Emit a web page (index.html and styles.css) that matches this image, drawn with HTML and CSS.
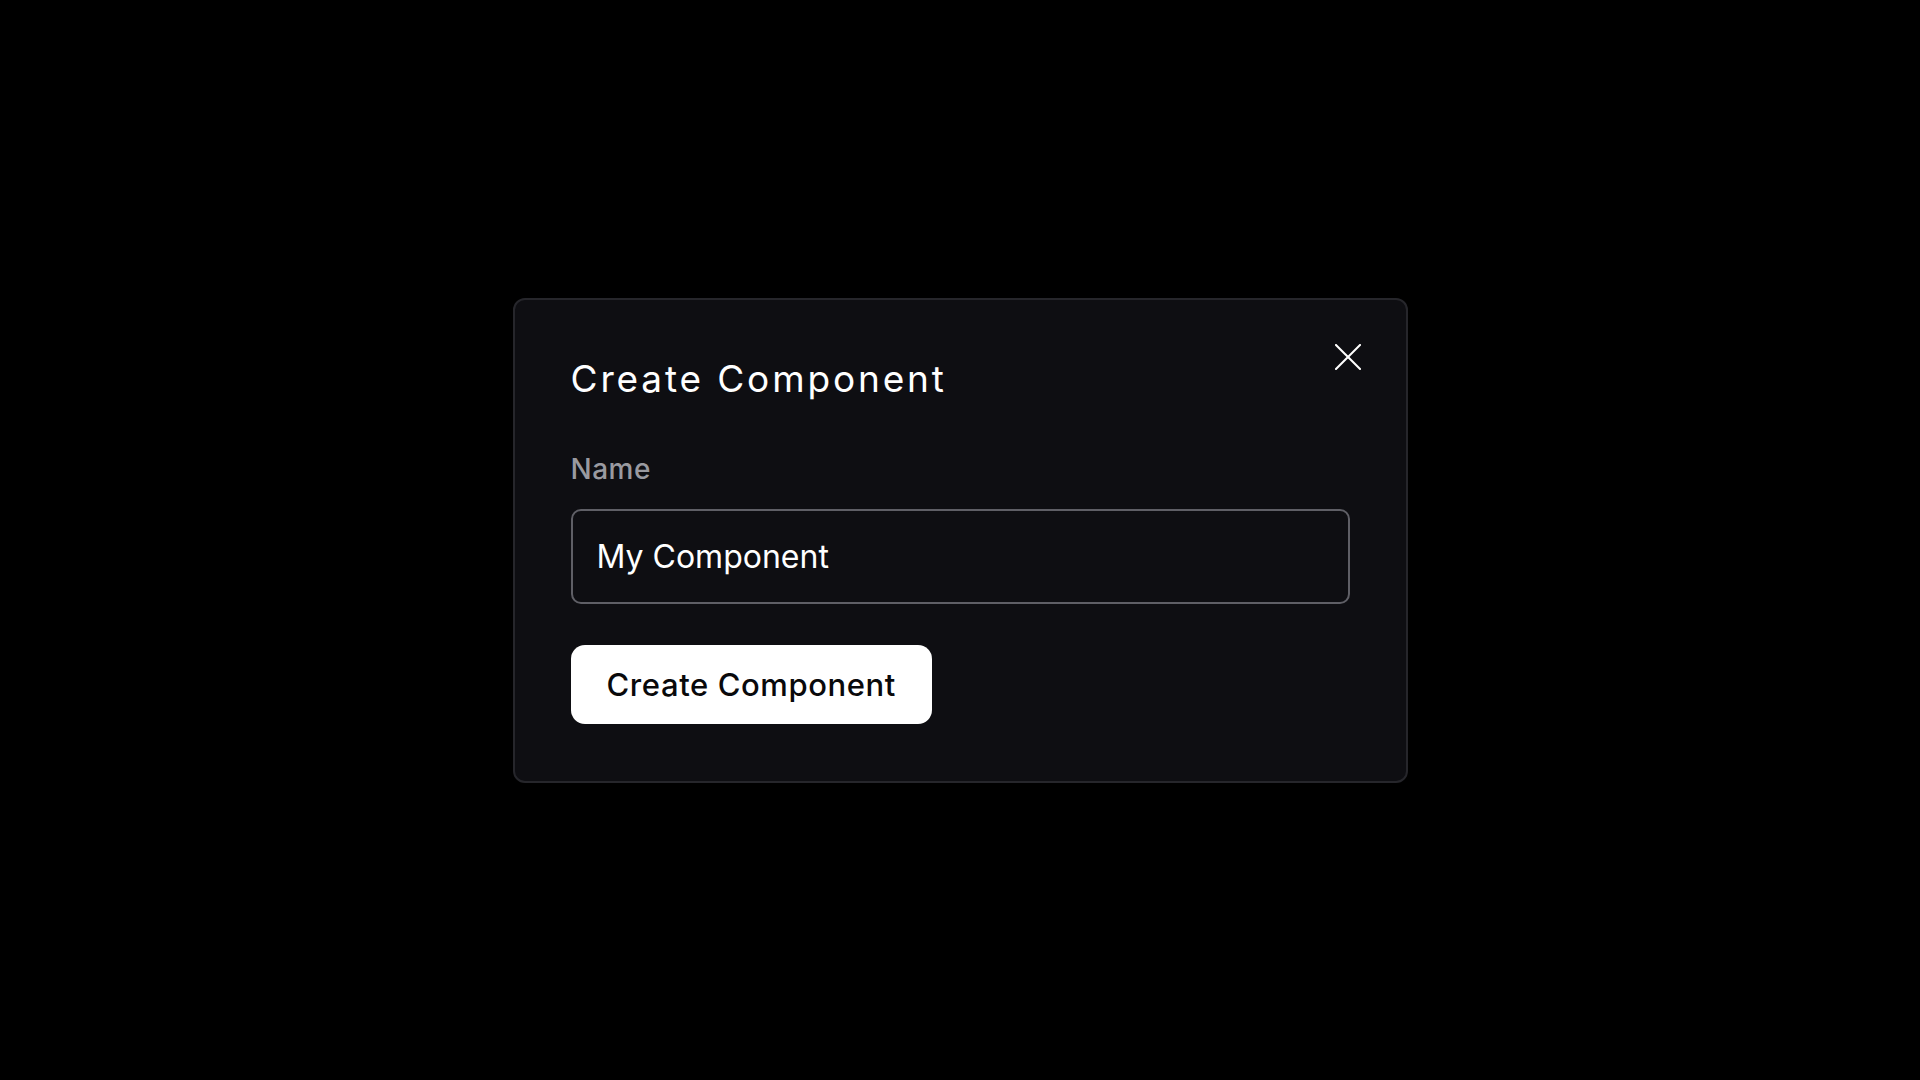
FILE: index.html
```html
<!DOCTYPE html>
<html lang="en">
<head>
<meta charset="utf-8">
<title>Create Component</title>
<link rel="stylesheet" href="styles.css">
</head>
<body>
<div class="overlay">
  <div class="dialog">
    <button class="close" aria-label="Close">
      <svg width="26" height="26" viewBox="0 0 26 26" fill="none" stroke="#ffffff" stroke-width="2" stroke-linecap="square">
        <line x1="1" y1="1" x2="25" y2="25"/>
        <line x1="25" y1="1" x2="1" y2="25"/>
      </svg>
    </button>
    <h2 class="title">Create Component</h2>
    <label class="label" for="name">Name</label>
    <div class="input" id="name">My Component</div>
    <div class="actions">
      <button class="primary">Create Component</button>
    </div>
  </div>
</div>
</body>
</html>
```

FILE: styles.css
```css
html, body {
  margin: 0;
  padding: 0;
  background: #000000;
  height: 100%;
}
body {
  font-family: Inter, "Noto Sans", sans-serif;
  color: #ffffff;
}
.overlay {
  height: 1080px;
  display: flex;
  align-items: center;
  justify-content: center;
}
.dialog {
  position: relative;
  box-sizing: border-box;
  width: 895px;
  padding: 57px 56px 57px 56px;
  background: #0e0e12;
  border: 2px solid #26262b;
  border-radius: 12px;
  display: flex;
  flex-direction: column;
}
.close {
  position: absolute;
  top: 44px;
  right: 45px;
  width: 26px;
  height: 26px;
  padding: 0;
  border: 0;
  background: transparent;
  display: flex;
}
.title {
  margin: 0;
  font-size: 37px;
  line-height: 43px;
  font-weight: 400;
  letter-spacing: 2.85px;
  color: #ffffff;
}
.label {
  margin-top: 52px;
  font-size: 28px;
  line-height: 34px;
  font-weight: 500;
  letter-spacing: 0.5px;
  color: #9a9aa0;
}
.input {
  margin-top: 23px;
  box-sizing: border-box;
  height: 95px;
  border: 2px solid #5f5f66;
  border-radius: 10px;
  padding: 0 24px;
  display: flex;
  align-items: center;
  font-size: 32px;
  color: #ffffff;
}
.actions {
  margin-top: 41px;
  display: flex;
}
.primary {
  height: 79px;
  padding: 0 36px;
  border: 0;
  border-radius: 14px;
  background: #ffffff;
  color: #09090b;
  font-family: Inter, "Noto Sans", sans-serif;
  font-size: 31px;
  font-weight: 500;
  letter-spacing: 0.6px;
}
```
